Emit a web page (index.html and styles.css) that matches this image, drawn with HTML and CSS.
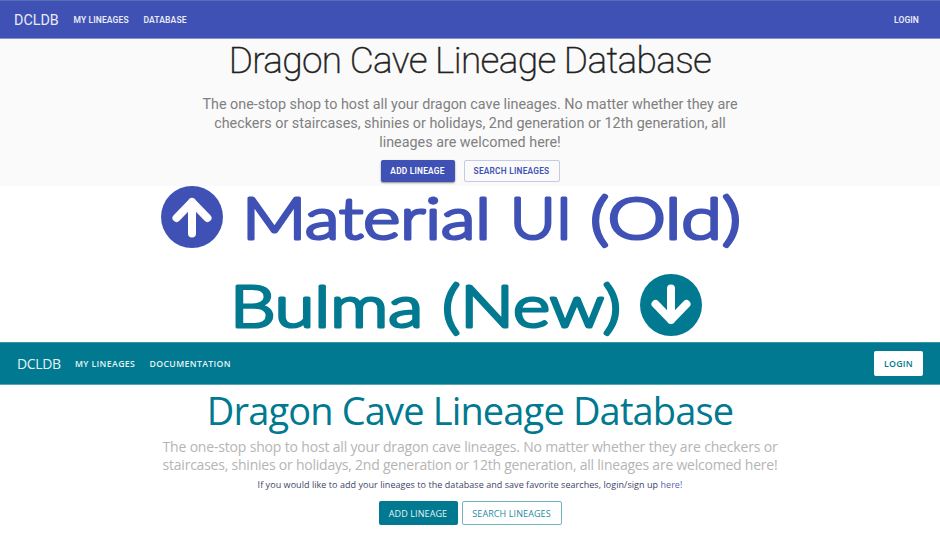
FILE: index.html
```html
<!DOCTYPE html>
<html lang="en">
<head>
<meta charset="utf-8">
<title>DCLDB</title>
<link rel="stylesheet" href="styles.css">
</head>
<body>
<section class="old">
  <nav class="old-nav">
    <span class="old-brand">DCLDB</span>
    <a class="old-link lineages">MY LINEAGES</a>
    <a class="old-link database">DATABASE</a>
    <a class="old-link login">LOGIN</a>
  </nav>
  <div class="old-hero">
    <h1 class="old-title">Dragon Cave Lineage Database</h1>
    <p class="old-lead">The one-stop shop to host all your dragon cave lineages. No matter whether they are<br>checkers or staircases, shinies or holidays, 2nd generation or 12th generation, all<br>lineages are welcomed here!</p>
    <div class="old-actions">
      <button class="old-btn filled">ADD LINEAGE</button>
      <button class="old-btn outlined">SEARCH LINEAGES</button>
    </div>
  </div>
</section>
<section class="banner">
  <div class="row material">
    <svg class="arrow" viewBox="0 0 62 62"><circle cx="31" cy="31" r="31" fill="#3f51b5"/><path d="M31 47.500V16M15.500 32 31 16l15.500 16" fill="none" stroke="#fff" stroke-width="8" stroke-linecap="round" stroke-linejoin="round"/></svg>
    <svg class="label" width="500" height="78">
      <text x="-1" y="53" textLength="249" lengthAdjust="spacingAndGlyphs">Material</text>
      <text x="267" y="53" textLength="62" lengthAdjust="spacingAndGlyphs">UI</text>
      <text x="347" y="53" textLength="151" lengthAdjust="spacingAndGlyphs">(Old)</text>
    </svg>
  </div>
  <div class="row bulma">
    <svg class="label" width="409" height="78">
      <text x="-1" y="53" textLength="193" lengthAdjust="spacingAndGlyphs">Bulma</text>
      <text x="211" y="53" textLength="179" lengthAdjust="spacingAndGlyphs">(New)</text>
    </svg>
    <svg class="arrow" viewBox="0 0 62 62"><circle cx="31" cy="31" r="31" fill="#007991"/><path d="M31 14.500V46M15.500 30 31 46l15.500-16" fill="none" stroke="#fff" stroke-width="8" stroke-linecap="round" stroke-linejoin="round"/></svg>
  </div>
</section>
<section class="new">
  <nav class="new-nav">
    <span class="new-brand">DCLDB</span>
    <a class="new-link lineages">MY LINEAGES</a>
    <a class="new-link docs">DOCUMENTATION</a>
    <button class="new-login">LOGIN</button>
  </nav>
  <div class="new-hero">
    <h1 class="new-title">Dragon Cave Lineage Database</h1>
    <p class="new-lead"><span class="l1">The one-stop shop to host all your dragon cave lineages. No matter whether they are checkers or</span><br><span class="l2">staircases, shinies or holidays, 2nd generation or 12th generation, all lineages are welcomed here!</span></p>
    <p class="new-note">If you would like to add your lineages to the database and save favorite searches, login/sign up <a>here!</a></p>
    <div class="new-actions">
      <button class="new-btn filled">ADD LINEAGE</button>
      <button class="new-btn outlined">SEARCH LINEAGES</button>
    </div>
  </div>
</section>
</body>
</html>
```

FILE: styles.css
```css
* { box-sizing: border-box; }
body { margin: 0; width: 940px; height: 534px; overflow: hidden; background: #fff; }
h1, p { margin: 0; white-space: nowrap; font-weight: 400; }
button { padding: 0; border: 0; font: inherit; white-space: nowrap; }
nav { display: flex; align-items: center; white-space: nowrap; }

.old { height: 186px; background: #fafafa; font-family: Roboto, sans-serif; }
.old-nav { height: 39px; padding: 0 21px 0 14px; background: #3f51b5; border-top: 1px solid #5470b0; border-bottom: 1px solid #8791cf; color: #e8eaf6; }
.old-brand { width: 59.500px; font-size: 14.300px; }
.old-link { font-size: 8.500px; font-weight: 600; letter-spacing: 0.120px; }
.old-link.lineages { width: 70px; }
.old-link.login { margin-left: auto; }
.old-hero { display: flex; flex-direction: column; align-items: center; }
.old-title { font-size: 37px; font-weight: 200; line-height: 44px; letter-spacing: -0.660px; color: #212121; -webkit-text-stroke: 0.400px #212121; }
.old-lead { margin-top: 12px; font-size: 14.350px; line-height: 19px; text-align: center; color: #808080; }
.old-actions { display: flex; gap: 9px; margin-top: 8px; }
.old-btn { height: 22px; border-radius: 2px; font-size: 8.300px; font-weight: 600; letter-spacing: 0.240px; }
.old-btn.filled { width: 74px; background: #3f51b5; color: #fff; box-shadow: 0 1px 2px rgba(0, 0, 0, .45); }
.old-btn.outlined { width: 96px; background: transparent; border: 1px solid #c5cae9; color: #3f51b5; }

.banner { height: 156px; }
.row { display: flex; align-items: flex-start; height: 78px; }
.arrow { width: 62px; height: 62px; flex: none; }
.label { flex: none; overflow: visible; font-family: Lato, sans-serif; font-size: 58px; font-weight: 300; stroke-width: 3.200px; stroke-linejoin: round; stroke-linecap: round; }
.material { padding-left: 161px; }
.material .label { margin-left: 20px; fill: #3f51b5; stroke: #3f51b5; }
.bulma { padding: 10px 0 0 231px; }
.bulma .label { fill: #007991; stroke: #007991; }

.new { font-family: "Open Sans", "Noto Sans", sans-serif; }
.new-nav { height: 43px; padding: 0 17px; background: #007991; border-top: 1px solid #3995a8; border-bottom: 1px solid #59a7b6; color: #e6f3f5; }
.new-brand { width: 58px; font-size: 14px; letter-spacing: -0.350px; }
.new-link { font-size: 8.700px; font-weight: 600; letter-spacing: 0.370px; }
.new-link.lineages { width: 74.500px; }
.new-login { width: 49px; height: 25px; margin-left: auto; border-radius: 2px; background: #fff; color: #007991; font-size: 8.800px; font-weight: 600; letter-spacing: 0.250px; }
.new-hero { display: flex; flex-direction: column; align-items: center; }
.new-title { font-size: 38px; line-height: 50px; letter-spacing: -0.850px; color: #007991; }
.new-lead { margin-top: 3px; font-size: 14px; line-height: 18px; letter-spacing: -0.225px; color: #b5b5b5; text-align: center; }
.new-lead .l1 { letter-spacing: -0.175px; }
.new-note { margin-top: 4px; font-size: 9px; line-height: 14px; letter-spacing: 0.050px; color: #3c4568; }
.new-note a { color: #5b5fae; }
.new-actions { display: flex; gap: 4px; margin-top: 9px; }
.new-btn { height: 24px; border-radius: 2px; font-size: 9px; letter-spacing: 0.100px; }
.new-btn.filled { width: 79px; background: #007991; color: #e6f3f5; }
.new-btn.outlined { width: 100px; background: #fff; border: 1px solid #73b5c1; color: #278da1; }
```
